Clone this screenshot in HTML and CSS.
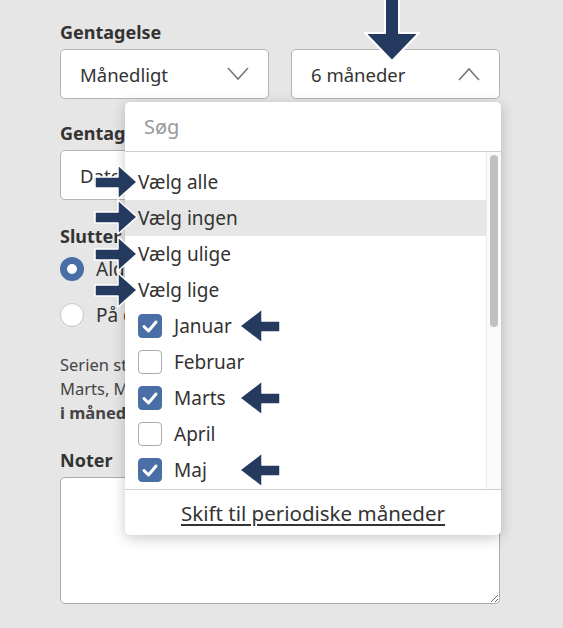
FILE: index.html
```html
<!DOCTYPE html>
<html lang="da">
<head>
<meta charset="utf-8">
<link rel="stylesheet" href="styles.css">
</head>
<body>
<div class="form">
  <div class="field">
    <div class="label">Gentagelse</div>
    <div class="select-row">
      <div class="select">
        <span>Månedligt</span>
        <svg class="chev" viewBox="0 0 22 14" width="22" height="14"><polyline points="1,1 11,12 21,1" fill="none" stroke="#777" stroke-width="1.6"/></svg>
      </div>
      <div class="select-wrap">
        <div class="select open">
          <span>6 måneder</span>
          <svg class="chev" viewBox="0 0 22 14" width="22" height="14"><polyline points="1,13 11,2 21,13" fill="none" stroke="#777" stroke-width="1.6"/></svg>
        </div>
        <div class="dropdown">
          <div class="search">Søg</div>
          <div class="list-area">
            <ul class="list">
              <li class="opt">Vælg alle</li>
              <li class="opt hover">Vælg ingen</li>
              <li class="opt">Vælg ulige</li>
              <li class="opt">Vælg lige</li>
              <li class="opt"><span class="cb on"><svg viewBox="0 0 24 24" width="24" height="24"><polyline points="6,12.5 10.5,17 18,8" fill="none" stroke="#fff" stroke-width="3" stroke-linecap="round" stroke-linejoin="round"/></svg></span>Januar</li>
              <li class="opt"><span class="cb"></span>Februar</li>
              <li class="opt"><span class="cb on"><svg viewBox="0 0 24 24" width="24" height="24"><polyline points="6,12.5 10.5,17 18,8" fill="none" stroke="#fff" stroke-width="3" stroke-linecap="round" stroke-linejoin="round"/></svg></span>Marts</li>
              <li class="opt"><span class="cb"></span>April</li>
              <li class="opt"><span class="cb on"><svg viewBox="0 0 24 24" width="24" height="24"><polyline points="6,12.5 10.5,17 18,8" fill="none" stroke="#fff" stroke-width="3" stroke-linecap="round" stroke-linejoin="round"/></svg></span>Maj</li>
              <li class="opt"><span class="cb"></span>Juni</li>
            </ul>
            <div class="scrollbar"><div class="thumb"></div></div>
          </div>
          <div class="footer"><a class="switch">Skift til periodiske måneder</a></div>
        </div>
      </div>
    </div>
  </div>

  <div class="field">
    <div class="label">Gentagelsesmønster</div>
    <div class="select full"><span>Dato</span></div>
  </div>

  <div class="field ends">
    <div class="label">Slutter</div>
    <div class="radios">
      <div class="radio-row"><span class="radio on"></span>Aldrig</div>
      <div class="radio-row"><span class="radio"></span>På dato</div>
    </div>
  </div>

  <p class="summary">Serien starter i dag og gentages i Januar,<br>Marts, Maj, Juli, September og November<br><b>i måneden</b></p>

  <div class="field">
    <div class="label">Noter</div>
    <textarea class="notes"></textarea>
  </div>
</div>

<svg class="arrow down" viewBox="0 -6 60 70" width="60" height="70"><polygon points="23,-8 37,-8 37,33 57,33 30,61 3,33 23,33" fill="#243b5f" stroke="#fff" stroke-width="2" stroke-linejoin="round"/></svg>
<svg class="arrow r1" viewBox="0 0 48 40" width="48" height="40"><polygon points="3,15 26,15 26,3 45,20 26,37 26,26 3,26" fill="#243b5f" stroke="#fff" stroke-width="1.5" stroke-linejoin="round"/></svg>
<svg class="arrow r2" viewBox="0 0 48 40" width="48" height="40"><polygon points="3,15 26,15 26,3 45,20 26,37 26,26 3,26" fill="#243b5f" stroke="#fff" stroke-width="1.5" stroke-linejoin="round"/></svg>
<svg class="arrow r3" viewBox="0 0 48 40" width="48" height="40"><polygon points="3,15 26,15 26,3 45,20 26,37 26,26 3,26" fill="#243b5f" stroke="#fff" stroke-width="1.5" stroke-linejoin="round"/></svg>
<svg class="arrow r4" viewBox="0 0 48 40" width="48" height="40"><polygon points="3,15 26,15 26,3 45,20 26,37 26,26 3,26" fill="#243b5f" stroke="#fff" stroke-width="1.5" stroke-linejoin="round"/></svg>
<svg class="arrow l1" viewBox="0 0 46 40" width="46" height="40"><polygon points="3,20 25,3 25,15 43,15 43,26 25,26 25,37" fill="#243b5f" stroke="#fff" stroke-width="1.5" stroke-linejoin="round"/></svg>
<svg class="arrow l2" viewBox="0 0 46 40" width="46" height="40"><polygon points="3,20 25,3 25,15 43,15 43,26 25,26 25,37" fill="#243b5f" stroke="#fff" stroke-width="1.5" stroke-linejoin="round"/></svg>
<svg class="arrow l3" viewBox="0 0 46 40" width="46" height="40"><polygon points="3,20 25,3 25,15 43,15 43,26 25,26 25,37" fill="#243b5f" stroke="#fff" stroke-width="1.5" stroke-linejoin="round"/></svg>
</body>
</html>
```

FILE: styles.css
```css
* { box-sizing: border-box; }
html, body { margin: 0; padding: 0; }
body {
  background: #e6e6e6;
  font-family: "Noto Sans", "Open Sans", sans-serif;
  color: #333;
  width: 563px;
  height: 628px;
  overflow: hidden;
  position: relative;
}
.form {
  padding: 20px 0 0 60px;
  width: 500px;
}
.field { margin-bottom: 22px; }
.field.ends { margin-top: 24px; margin-bottom: 0; }
.label {
  font-size: 18px;
  font-weight: 700;
  line-height: 24px;
  margin-bottom: 5px;
  color: #333;
}
.select-row {
  display: flex;
  gap: 22px;
}
.select-wrap { position: relative; }
.select {
  width: 209px;
  height: 50px;
  background: #fff;
  border: 1px solid #b5b5b5;
  border-radius: 5px;
  display: flex;
  align-items: center;
  justify-content: space-between;
  padding: 0 19px 0 19px;
  font-size: 18.5px;
  color: #333;
}
.select.full { width: 440px; }
.chev { display: block; }
.dropdown {
  position: absolute;
  top: 53px;
  right: -1px;
  width: 376px;
  height: 433px;
  background: #fff;
  border-radius: 5px;
  box-shadow: 0 3px 14px rgba(0,0,0,0.22);
  display: flex;
  flex-direction: column;
  z-index: 5;
}
.search {
  height: 50px;
  border-bottom: 1px solid #cfcfcf;
  display: flex;
  align-items: center;
  padding-left: 19px;
  font-size: 20px;
  color: #999;
}
.list-area {
  flex: 1;
  display: flex;
  overflow: hidden;
}
.list {
  list-style: none;
  margin: 0;
  padding: 12px 0 0 0;
  flex: 1;
  overflow: hidden;
}
.opt {
  height: 36px;
  display: flex;
  align-items: center;
  gap: 12px;
  padding-left: 13px;
  font-size: 19px;
  color: #333;
}
.opt.hover { background: #e6e6e6; }
.cb {
  width: 24px;
  height: 24px;
  border: 1px solid #aaa;
  border-radius: 4px;
  background: #fff;
  display: block;
  flex: none;
}
.cb.on {
  background: #4a6ea6;
  border-color: #4a6ea6;
}
.cb svg { display: block; margin: -1px; }
.scrollbar {
  width: 15px;
  border-left: 1px solid #ececec;
  background: #fafafa;
  padding: 3px 3px 0 3px;
  flex: none;
}
.thumb {
  width: 8px;
  height: 172px;
  background: #c1c1c1;
  border-radius: 4px;
}
.footer {
  height: 46px;
  border-top: 1px solid #cfcfcf;
  display: flex;
  align-items: center;
  justify-content: center;
}
.switch {
  font-size: 20.5px;
  line-height: 28px;
  color: #333;
  text-decoration: underline;
  text-underline-offset: 3px;
}
.radios {
  display: flex;
  flex-direction: column;
  gap: 10px;
  margin-top: -2px;
}
.radio-row {
  height: 36px;
  display: flex;
  align-items: center;
  gap: 12px;
  font-size: 19px;
  color: #333;
}
.radio {
  width: 24px;
  height: 24px;
  border-radius: 50%;
  background: #fff;
  border: 1px solid #c4c4c4;
  display: block;
}
.radio.on {
  border: 7px solid #4a6ea6;
}
.summary {
  margin: 20px 0 23px 0;
  font-size: 16.5px;
  line-height: 24px;
  color: #444;
  white-space: nowrap;
}
.notes {
  display: block;
  width: 440px;
  height: 127px;
  border: 1px solid #aaa;
  border-radius: 5px;
  background: #fff;
  resize: vertical;
  margin: 0;
}
.arrow { position: absolute; z-index: 10; overflow: visible; }
.down { left: 362px; top: -6px; }
.r1 { left: 92px; top: 162px; }
.r2 { left: 92px; top: 197px; }
.r3 { left: 92px; top: 234px; }
.r4 { left: 92px; top: 270px; }
.l1 { left: 237px; top: 306px; }
.l2 { left: 237px; top: 378px; }
.l3 { left: 237px; top: 450px; }
```
